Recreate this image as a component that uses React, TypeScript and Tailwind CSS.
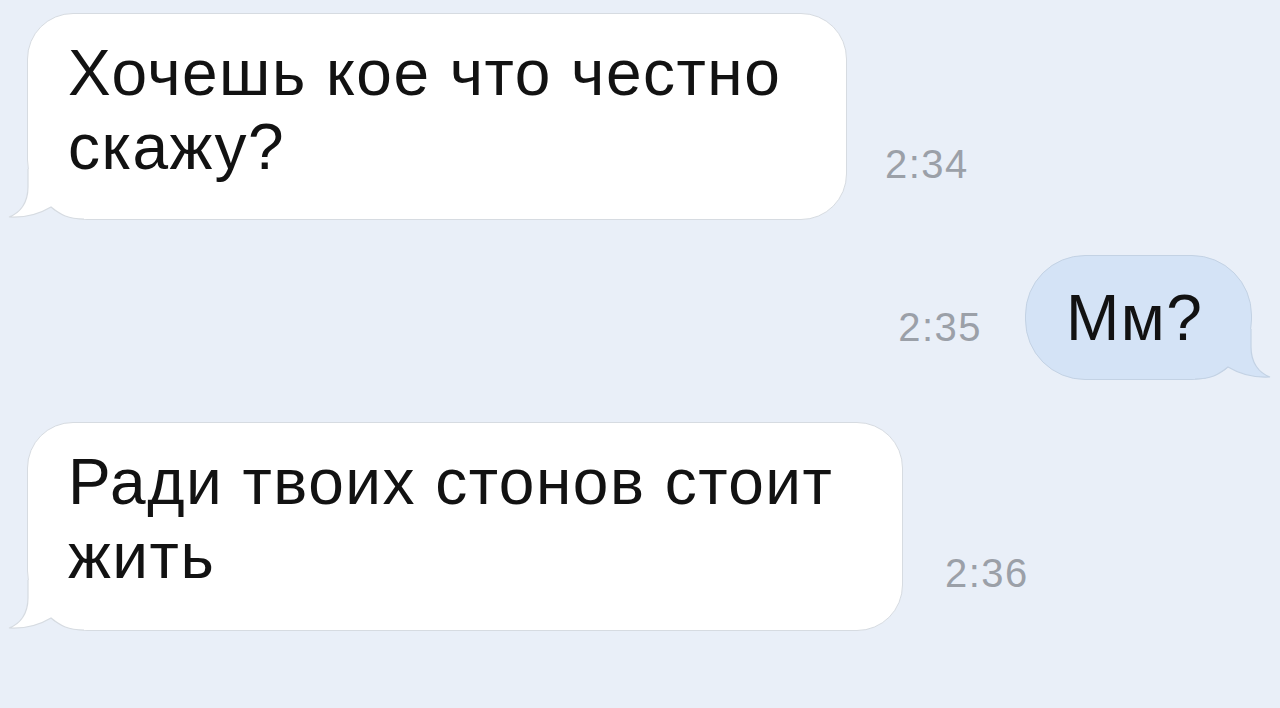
import React from 'react';

type Side = 'left' | 'right';

const font = { fontFamily: '"Liberation Sans", Arial, sans-serif' };

function Tail({ side, fill, stroke }: { side: Side; fill: string; stroke: string }) {
  const outline = 'M22,0 L22,18 C22,34 14,44 3,48 C20,49 35,44 45,38 C55,46 62,50 78,50';
  return (
    <svg
      width="86"
      height="52"
      viewBox="0 0 86 52"
      className={
        side === 'left'
          ? 'absolute left-[-22px] bottom-[-2px]'
          : 'absolute right-[-22px] bottom-[-2px] -scale-x-100'
      }
    >
      <path d={outline + ' L82,50 L82,30 L52,0 Z'} fill={fill} />
      <path d={outline} fill="none" stroke={stroke} strokeWidth="1.2" />
    </svg>
  );
}

function Bubble({
  lines,
  side,
  className,
}: {
  lines: string[];
  side: Side;
  className: string;
}) {
  const isLeft = side === 'left';
  return (
    <div
      className={`relative border ${
        isLeft
          ? 'bg-white border-[#d6dbe1] rounded-[46px] rounded-bl-[60px]'
          : 'bg-[#d4e3f6] border-[#c3d2e4] rounded-[60px]'
      } ${className}`}
    >
      <div className="relative z-10 text-[64px] leading-[74px] tracking-[1.5px] text-[#121212]">
        {lines.map((l) => (
          <div key={l} className="whitespace-nowrap">
            {l}
          </div>
        ))}
      </div>
      <Tail
        side={side}
        fill={isLeft ? '#ffffff' : '#d4e3f6'}
        stroke={isLeft ? '#d6dbe1' : '#c3d2e4'}
      />
    </div>
  );
}

function Time({ children, className }: { children: string; className: string }) {
  return (
    <div className={`text-[40px] leading-none tracking-[1.5px] text-[#9ba0a8] ${className}`}>
      {children}
    </div>
  );
}

export default function App() {
  return (
    <div style={font} className="w-full h-[708px] bg-[#e9eff8] overflow-hidden pt-[13px] pl-[27px] pr-[28px]">
      <div className="flex items-end">
        <Bubble
          side="left"
          lines={['Хочешь кое что честно', 'скажу?']}
          className="w-[820px] pl-[40px] pt-[22px] pb-[35px]"
        />
        <Time className="ml-[38px] mb-[36px]">2:34</Time>
      </div>

      <div className="flex items-end justify-end mt-[35px]">
        <Time className="mr-[43px] mb-[33px]">2:35</Time>
        <Bubble side="right" lines={['Мм?']} className="w-[227px] pl-[40px] pt-[25px] pb-[24px]" />
      </div>

      <div className="flex items-end mt-[42px]">
        <Bubble
          side="left"
          lines={['Ради твоих стонов стоит', 'жить']}
          className="w-[876px] pl-[40px] pt-[22px] pb-[37px]"
        />
        <Time className="ml-[42px] mb-[38px]">2:36</Time>
      </div>
    </div>
  );
}
